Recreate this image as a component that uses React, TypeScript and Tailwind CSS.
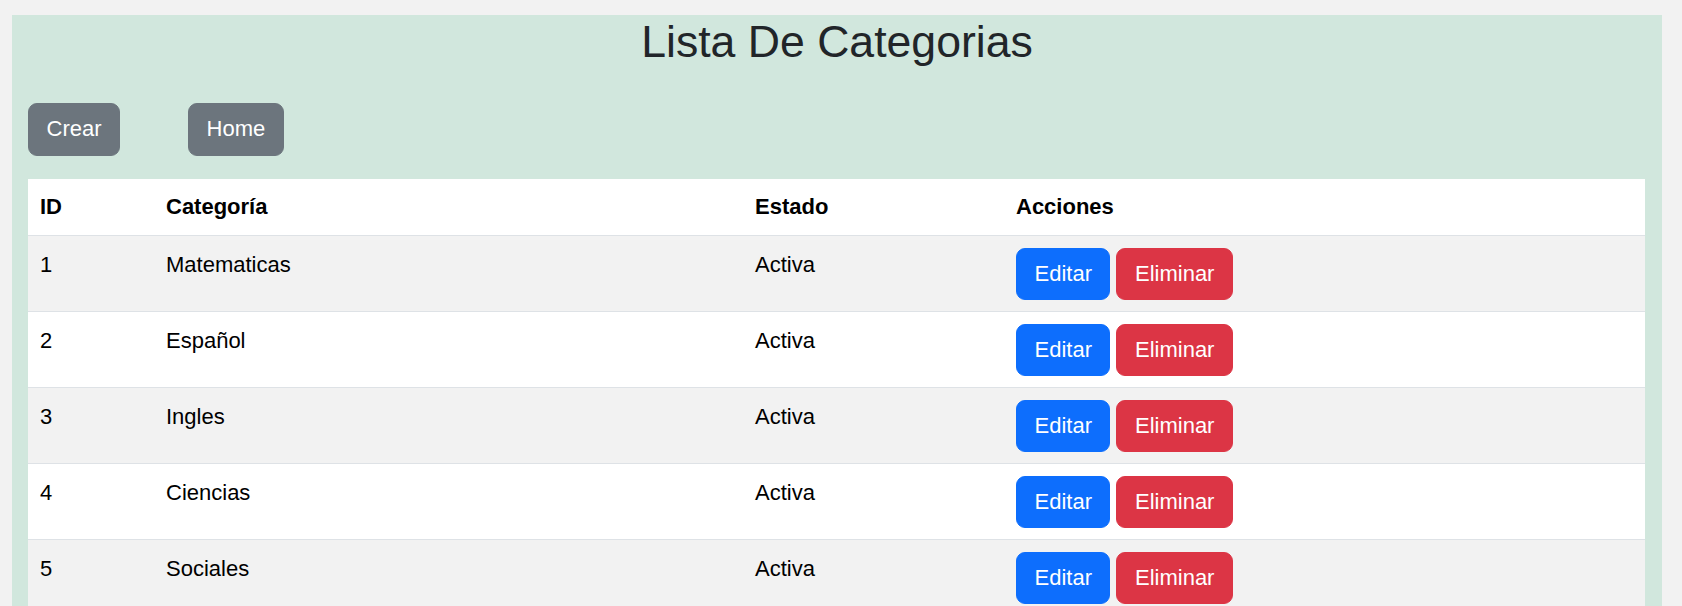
const categorias = [
  { id: 1, nombre: "Matematicas", estado: "Activa" },
  { id: 2, nombre: "Español", estado: "Activa" },
  { id: 3, nombre: "Ingles", estado: "Activa" },
  { id: 4, nombre: "Ciencias", estado: "Activa" },
  { id: 5, nombre: "Sociales", estado: "Activa" },
];

export default function App() {
  return (
    <div className="min-h-screen bg-[#f2f2f2] pt-[15px] font-['Liberation_Sans',Arial,sans-serif]">
      <div className="ml-[12px] w-[1650px] bg-[#d1e7dd] px-[16px] pb-[16px]">
        <h1 className="mb-[34px] text-center text-[44.6px] leading-[1.2] font-normal text-[#212529]">
          Lista De Categorias
        </h1>

        <div className="mb-[23px] flex">
          <button className="rounded-[9px] border border-[#6c757d] bg-[#6c757d] px-[17.5px] pt-[8.5px] pb-[9.5px] text-[22px] leading-[33px] text-white">
            Crear
          </button>
          <button className="ml-[68px] rounded-[9px] border border-[#6c757d] bg-[#6c757d] px-[17.5px] pt-[8.5px] pb-[9.5px] text-[22px] leading-[33px] text-white">
            Home
          </button>
        </div>

        <table className="w-[1617px] table-fixed border-collapse text-left text-[22px] leading-[33px] text-black">
          <colgroup>
            <col className="w-[126px]" />
            <col className="w-[589px]" />
            <col className="w-[261px]" />
            <col className="w-[641px]" />
          </colgroup>
          <thead>
            <tr className="border-b border-[#dee2e6] bg-white">
              <th className="px-[12px] pt-[11px] pb-[12px] font-bold">ID</th>
              <th className="px-[12px] pt-[11px] pb-[12px] font-bold">Categoría</th>
              <th className="px-[12px] pt-[11px] pb-[12px] font-bold">Estado</th>
              <th className="px-[12px] pt-[11px] pb-[12px] font-bold">Acciones</th>
            </tr>
          </thead>
          <tbody>
            {categorias.map((c, i) => (
              <tr
                key={c.id}
                className={`border-b border-[#dee2e6] ${i % 2 === 0 ? "bg-[#f2f2f2]" : "bg-white"}`}
              >
                <td className="px-[12px] pt-[12px] pb-[11px] align-top">{c.id}</td>
                <td className="px-[12px] pt-[12px] pb-[11px] align-top">{c.nombre}</td>
                <td className="px-[12px] pt-[12px] pb-[11px] align-top">{c.estado}</td>
                <td className="px-[12px] pt-[12px] pb-[11px] align-top">
                  <div className="flex gap-[6px]">
                    <button className="rounded-[9px] border border-[#0d6efd] bg-[#0d6efd] px-[17.5px] py-[8.5px] text-[22px] leading-[33px] text-white">
                      Editar
                    </button>
                    <button className="rounded-[9px] border border-[#dc3545] bg-[#dc3545] px-[17.5px] py-[8.5px] text-[22px] leading-[33px] text-white">
                      Eliminar
                    </button>
                  </div>
                </td>
              </tr>
            ))}
          </tbody>
        </table>
      </div>
    </div>
  );
}
